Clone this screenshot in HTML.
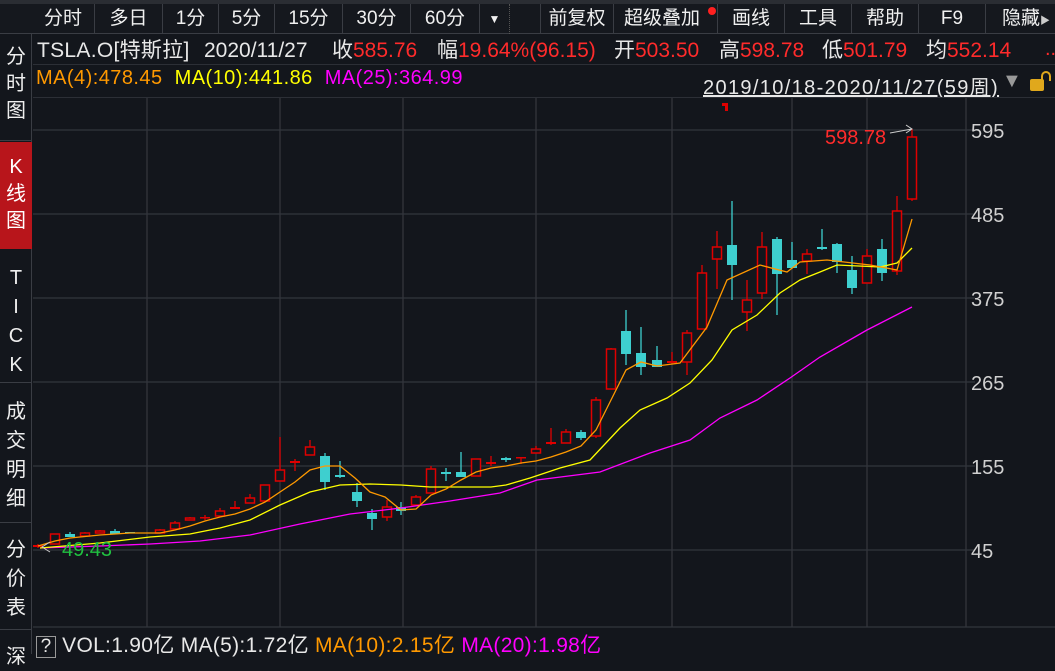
<!DOCTYPE html>
<html><head><meta charset="utf-8"><style>
*{margin:0;padding:0;box-sizing:border-box}
body{width:1055px;height:654px;background:#13161c;overflow:hidden;position:relative;font-family:"Liberation Sans","Noto Sans CJK SC",sans-serif;color:#e8e8e8}
.t{position:absolute;white-space:nowrap}
.h{position:absolute;top:38px;height:26px;line-height:26px;font-size:21px;white-space:nowrap}
.top{position:absolute;left:0;top:0;width:1055px;height:34px;background:#15181e;border-bottom:1px solid #3a3d44}
.tab{position:absolute;top:4px;height:30px;line-height:30px;font-size:19px;text-align:center;border-right:1px solid #3a3d44;color:#f0f0f0}
.side{position:absolute;left:0;top:34px;width:32px;height:620px;border-right:1px solid #3a3d44;background:#13161c}
.sv{position:absolute;left:0;width:32px;text-align:center;font-size:20px;line-height:27px;color:#eee}
.sep{position:absolute;left:0;width:32px;height:1px;background:#3a3d44}
.r{color:#ff2b2b}
</style></head><body>
<div class="top">
<div style="position:absolute;left:0;top:0;width:1055px;height:4px;background:#2a2d33"></div>
<div class="tab" style="left:32px;width:63px">分时</div>
<div class="tab" style="left:95px;width:68px">多日</div>
<div class="tab" style="left:163px;width:56px">1分</div>
<div class="tab" style="left:219px;width:56px">5分</div>
<div class="tab" style="left:275px;width:68px">15分</div>
<div class="tab" style="left:343px;width:68px">30分</div>
<div class="tab" style="left:411px;width:69px">60分</div>
<div class="tab" style="left:480px;width:30px;font-size:12px;border-right:1px dotted #555">▼</div>
<div class="tab" style="left:510px;width:31px"></div>
<div class="tab" style="left:541px;width:73px">前复权</div>
<div class="tab" style="left:614px;width:104px;text-align:left;padding-left:10px">超级叠加<span style="position:absolute;left:94px;top:3px;width:8px;height:8px;border-radius:50%;background:#ff2020"></span></div>
<div class="tab" style="left:718px;width:67px">画线</div>
<div class="tab" style="left:785px;width:67px">工具</div>
<div class="tab" style="left:852px;width:67px">帮助</div>
<div class="tab" style="left:919px;width:67px">F9</div>
<div class="tab" style="left:986px;width:69px;text-align:left;padding-left:16px;border-right:none">隐藏<span style="font-size:10px;color:#ccc">▶</span></div>
</div>
<div class="side">
<div class="sv" style="top:10px">分<br>时<br>图</div>
<div class="sep" style="top:106px"></div>
<div style="position:absolute;left:0;top:108px;width:32px;height:107px;background:#b8151b"></div>
<div class="sv" style="top:120px;color:#fff">K<br>线<br>图</div>
<div class="sv" style="top:230px;line-height:29px">T<br>I<br>C<br>K</div>
<div class="sep" style="top:348px"></div>
<div class="sv" style="top:364px;line-height:29px">成<br>交<br>明<br>细</div>
<div class="sep" style="top:488px"></div>
<div class="sv" style="top:502px;line-height:29px">分<br>价<br>表</div>
<div class="sep" style="top:595px"></div>
<div class="sv" style="top:610px">深</div>
</div>
<div class="h" style="left:37px;letter-spacing:0.3px">TSLA.O[特斯拉]</div>
<div class="h" style="left:204px">2020/11/27</div>
<div class="h" style="left:332px">收<span class="r">585.76</span></div>
<div class="h" style="left:437px">幅<span class="r">19.64%(96.15)</span></div>
<div class="h" style="left:614px">开<span class="r">503.50</span></div>
<div class="h" style="left:719px">高<span class="r">598.78</span></div>
<div class="h" style="left:822px">低<span class="r">501.79</span></div>
<div class="h" style="left:926px">均<span class="r">552.14</span></div>
<div class="t" style="left:1045px;top:38px;font-size:20px;color:#ff2b2b">..</div>
<div style="position:absolute;left:33px;top:64px;width:1022px;height:1px;background:#2c2f36"></div>
<div class="t" style="left:36px;top:67px;font-size:20px;letter-spacing:0.45px"><span style="color:#ff9900">MA(4):478.45</span>&nbsp;&nbsp;<span style="color:#ffff00">MA(10):441.86</span>&nbsp;&nbsp;<span style="color:#ff00ff">MA(25):364.99</span></div>
<div class="t" style="left:703px;top:71px;font-size:20px;letter-spacing:1.35px;text-decoration:underline">2019/10/18-2020/11/27(59周)</div>
<div class="t" style="left:1002px;top:70px;font-size:20px;color:#999">▼</div>
<div style="position:absolute;left:1030px;top:79px;width:14px;height:12px;background:#e0a81c;border-radius:2px"></div>
<div style="position:absolute;left:1041px;top:71px;width:10px;height:10px;border:2px solid #e0a81c;border-bottom:none;border-radius:5px 5px 0 0"></div>
<div style="position:absolute;left:33px;top:97px;width:1022px;height:1px;background:#2c2f36"></div>
<svg style="position:absolute;left:0;top:0" width="1055" height="654">
<g stroke="#33363c" stroke-width="1.3">
<line x1="33" y1="130" x2="975" y2="130"/><line x1="33" y1="214" x2="975" y2="214"/><line x1="33" y1="298" x2="975" y2="298"/><line x1="33" y1="382" x2="975" y2="382"/><line x1="33" y1="466" x2="975" y2="466"/><line x1="33" y1="550" x2="975" y2="550"/>
<line x1="147" y1="98" x2="147" y2="627"/><line x1="280" y1="98" x2="280" y2="627"/><line x1="403" y1="98" x2="403" y2="627"/><line x1="536" y1="98" x2="536" y2="627"/><line x1="672" y1="98" x2="672" y2="627"/><line x1="792" y1="98" x2="792" y2="627"/><line x1="867" y1="98" x2="867" y2="627"/><line x1="966" y1="98" x2="966" y2="627"/>
<line x1="33" y1="627" x2="1055" y2="627"/>
</g>
<g font-size="20" fill="#d0d0d0" font-family="Liberation Sans">
<text x="971" y="138">595</text><text x="971" y="222">485</text><text x="971" y="306">375</text><text x="971" y="390">265</text><text x="971" y="474">155</text><text x="971" y="558">45</text>
</g>
<path d="M722 103h6v8h-3v-5h-3z" fill="#dd0000"/>
<g id="c"></g>
<polyline fill="none" stroke="#ff00ff" stroke-width="1.3" points="40,548 100,546 150,544 200,541 250,535 300,524 350,514 401,508 450,501 500,493 537,480 600,472 650,453 690,440 720,418 757,400 790,378 820,357 867,330 912,307"/>
<polyline fill="none" stroke="#ffff00" stroke-width="1.3" points="40,548 100,543 150,537 190,534 220,528 250,520 280,505 310,492 340,485 370,484 401,485 430,487 461,487 491,487 506,485 530,478 560,468 590,460 620,428 640,410 667,398 690,383 712,360 732,330 757,315 780,293 800,280 820,272 837,265 880,267 897,263 912,248"/>
<polyline fill="none" stroke="#ff9900" stroke-width="1.3" points="38,546 55,541 70,538 100,535 130,533 160,533 175,530 190,526 205,521 220,517 235,514 250,509 265,502 280,492 295,482 310,470 325,466 340,466 355,478 370,492 385,497 401,510 416,509 431,495 446,489 461,480 476,472 491,468 506,466 521,463 536,461 551,457 566,452 581,446 596,430 611,400 626,370 641,362 657,366 680,363 707,327 727,280 760,265 787,272 800,262 827,260 870,265 897,270 912,219"/>
<text x="825" y="144" font-size="20" fill="#ff2b2b" font-family="Liberation Sans">598.78</text>
<path d="M890 133 L912 129 M906 125 L912 129 L906 133" stroke="#ccc" fill="none"/>
<path d="M50 542 L42 547 L50 552" stroke="#ccc" fill="none"/>
<text x="62" y="556" font-size="20" fill="#20c040" font-family="Liberation Sans">49.43</text>
</svg>
<div class="t" style="left:36px;top:629px;font-size:21px;letter-spacing:0.3px"><span style="display:inline-block;border:1px solid #999;width:20px;text-align:center;line-height:20px;font-size:19px">?</span> VOL:1.90亿 MA(5):1.72亿 <span style="color:#ff9900">MA(10):2.15亿</span> <span style="color:#ff00ff">MA(20):1.98亿</span></div>
<script>
var d=[[38,'r',544,548,545,547,1],[55,'r',534,544,534,544],[70,'c',532,537,534,537],[85,'r',532,536,533,536],[100,'r',530,533,531,533],[115,'c',529,534,531,534],[130,'c',532,533,532,533],[160,'r',529,533,530,533],[175,'r',521,529,523,529],[190,'r',517,520,518,520],[205,'r',515,520,517,518,1],[220,'r',508,516,511,516],[235,'r',501,509,507,509,1],[250,'r',494,503,498,503],[265,'r',485,501,485,501],[280,'r',437,481,470,481],[295,'r',459,471,461,463,1],[310,'r',440,455,447,455],[325,'c',453,490,456,482],[340,'c',461,478,475,477],[357,'c',483,507,492,501],[372,'c',509,530,513,519],[387,'r',500,521,507,517],[401,'c',502,515,507,511],[416,'r',495,505,497,505],[431,'r',466,493,469,493],[446,'c',468,481,472,474],[461,'c',452,477,472,477],[476,'r',459,476,459,476],[491,'r',456,466,462,464,1],[506,'c',457,462,458,460],[521,'r',457,464,457,458,1],[536,'r',446,453,449,453],[551,'r',428,445,442,444,1],[566,'r',429,443,432,443],[581,'c',430,440,432,438],[596,'r',397,438,400,436],[611,'r',348,389,349,389],[626,'c',310,365,331,354],[641,'c',327,375,353,367],[657,'c',346,367,360,367],[672,'r',352,364,361,363,1],[687,'r',330,375,333,362],[702,'r',265,329,273,329],[717,'r',231,289,247,259],[732,'c',201,300,245,265],[747,'r',280,331,300,312],[762,'r',232,299,247,293],[777,'c',237,315,239,274],[792,'c',242,268,260,268],[807,'r',249,274,254,261],[822,'c',229,250,247,249],[837,'c',243,273,244,262],[852,'c',256,294,270,288],[867,'r',249,283,256,283],[882,'c',239,281,249,273],[897,'r',196,275,211,271],[912,'r',129,201,137,199]];
var s='';d.forEach(function(a){var x=a[0],col=a[1]=='r'?'#e00000':'#3ecfcf';s+='<line x1="'+x+'" y1="'+a[2]+'" x2="'+x+'" y2="'+a[3]+'" stroke="'+col+'" stroke-width="1.3"/>';var h=Math.max(a[5]-a[4],1.5);if(a[1]=='c'||a[6])s+='<rect x="'+(x-5)+'" y="'+a[4]+'" width="10" height="'+h+'" fill="'+col+'"/>';else s+='<rect x="'+(x-4.5)+'" y="'+a[4]+'" width="9" height="'+h+'" fill="#13161c" stroke="'+col+'" stroke-width="1.5"/>';});
document.getElementById('c').innerHTML=s;
</script>
</body></html>
